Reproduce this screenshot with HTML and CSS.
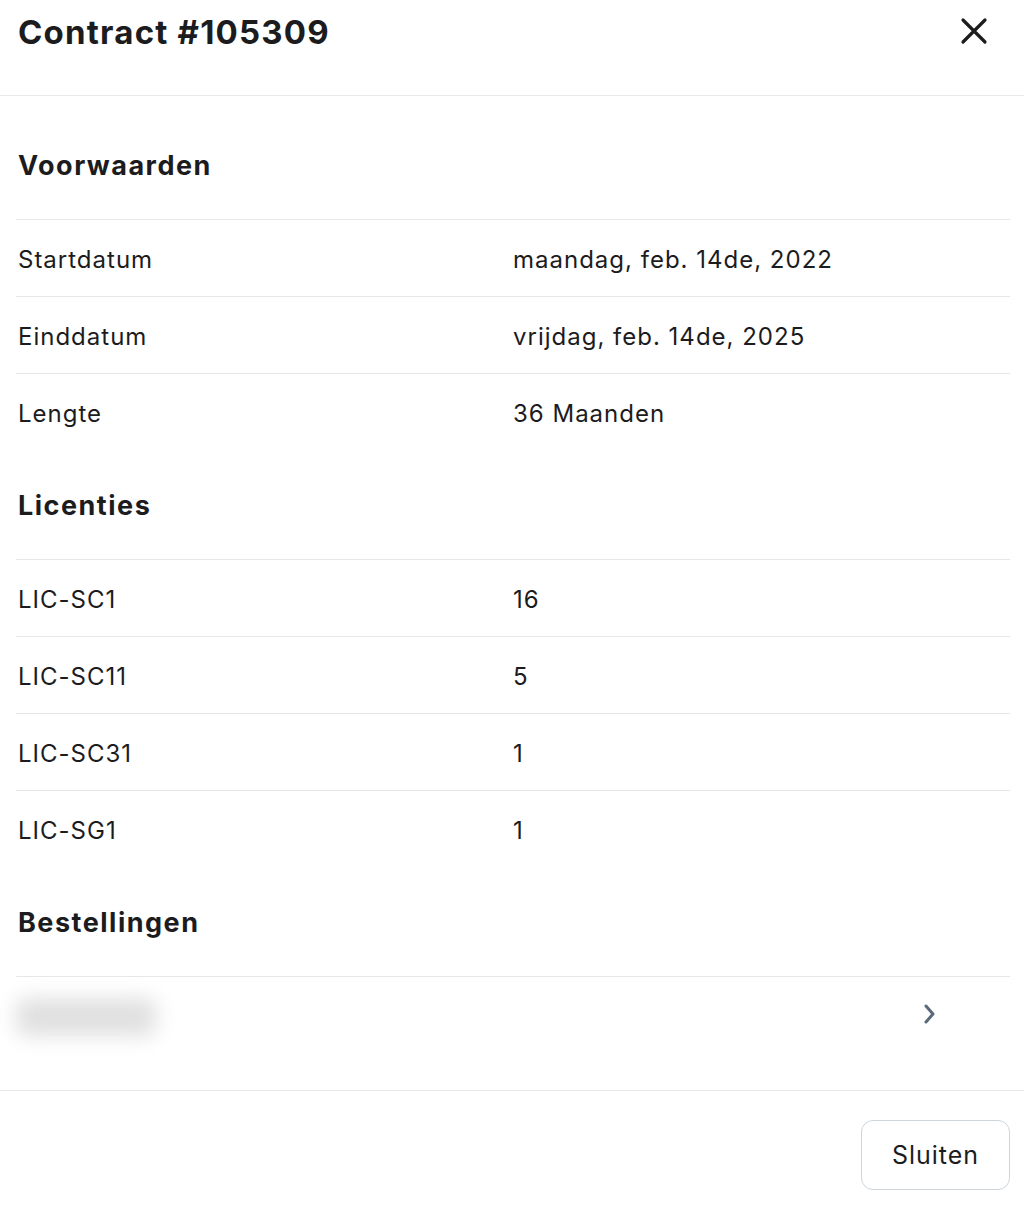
FILE: index.html
```html
<!DOCTYPE html>
<html lang="nl">
<head>
<meta charset="utf-8">
<title>Contract #105309</title>
<link rel="stylesheet" href="styles.css">
</head>
<body>
<div class="modal">
  <header class="modal-header">
    <h1 class="modal-title">Contract #105309</h1>
    <button class="close-btn" aria-label="Sluiten">
      <svg width="28" height="28" viewBox="0 0 28 28"><path d="M3 3 L25 25 M25 3 L3 25" stroke="#1c1c1e" stroke-width="3.2" stroke-linecap="round" fill="none"/></svg>
    </button>
  </header>
  <main class="modal-body">
    <section class="section">
      <h2 class="section-title">Voorwaarden</h2>
      <div class="row"><div class="cell">Startdatum</div><div class="cell value">maandag, feb. 14de, 2022</div></div>
      <div class="row"><div class="cell">Einddatum</div><div class="cell value">vrijdag, feb. 14de, 2025</div></div>
      <div class="row"><div class="cell">Lengte</div><div class="cell value">36 Maanden</div></div>
    </section>
    <section class="section">
      <h2 class="section-title">Licenties</h2>
      <div class="row"><div class="cell">LIC-SC1</div><div class="cell value">16</div></div>
      <div class="row"><div class="cell">LIC-SC11</div><div class="cell value">5</div></div>
      <div class="row"><div class="cell">LIC-SC31</div><div class="cell value">1</div></div>
      <div class="row"><div class="cell">LIC-SG1</div><div class="cell value">1</div></div>
    </section>
    <section class="section">
      <h2 class="section-title">Bestellingen</h2>
      <div class="order-row">
        <span class="blurred"></span>
        <svg class="chevron" width="14" height="22" viewBox="0 0 14 22"><path d="M3 3 L10 11 L3 19" stroke="#5b6a7a" stroke-width="3" stroke-linecap="round" stroke-linejoin="round" fill="none"/></svg>
      </div>
    </section>
  </main>
  <footer class="modal-footer">
    <button class="btn">Sluiten</button>
  </footer>
</div>
</body>
</html>
```
FILE: styles.css
```css
* { box-sizing: border-box; }
html, body { margin: 0; padding: 0; background: #fff; }
body {
  font-family: Inter, "Noto Sans", "Liberation Sans", sans-serif;
  color: #1c1c1e;
}
.modal { width: 1024px; }
.modal-header {
  height: 96px;
  border-bottom: 1px solid #e8e8ea;
  display: flex;
  justify-content: space-between;
  align-items: flex-start;
  padding: 12px 36px 0 18px;
}
.modal-title {
  margin: 0;
  font-size: 33px;
  line-height: 40px;
  font-weight: 700;
  letter-spacing: 1.2px;
}
.close-btn {
  background: none;
  border: 0;
  padding: 0;
  margin-top: 5px;
  width: 28px;
  height: 28px;
  cursor: pointer;
}
.modal-body { padding: 15px 14px 36px 16px; }
.section-title {
  margin: 0;
  height: 109px;
  display: flex;
  align-items: center;
  padding-left: 2px;
  font-size: 27px;
  font-weight: 700;
  letter-spacing: 1.5px;
  border-bottom: 1px solid #e6e6eb;
}
.row {
  display: grid;
  grid-template-columns: 1fr 1fr;
  height: 77px;
  align-items: center;
  border-bottom: 1px solid #e6e6eb;
  font-size: 24px;
  letter-spacing: 1px;
  padding-top: 2px;
}
.row:last-child { border-bottom: 0; }
.cell { padding-left: 2px; }
.cell.value { padding-left: 0; }
.order-row {
  height: 77px;
  display: flex;
  align-items: center;
  justify-content: space-between;
  padding-right: 73px;
}
.blurred {
  display: block;
  width: 140px;
  height: 38px;
  margin-left: 0;
  margin-top: 2px;
  background: #e0e0e0;
  border-radius: 10px;
  filter: blur(10px);
}
.chevron { display: block; margin-top: -3px; }
.modal-footer {
  border-top: 1px solid #e8e8ea;
  display: flex;
  justify-content: flex-end;
  padding: 29px 14px 15px 16px;
}
.btn {
  width: 149px;
  height: 70px;
  border: 1px solid #cfd5dc;
  border-radius: 12px;
  background: #fff;
  font-family: inherit;
  font-size: 25px;
  letter-spacing: 1px;
  color: #1c1c1e;
  cursor: pointer;
}
```
